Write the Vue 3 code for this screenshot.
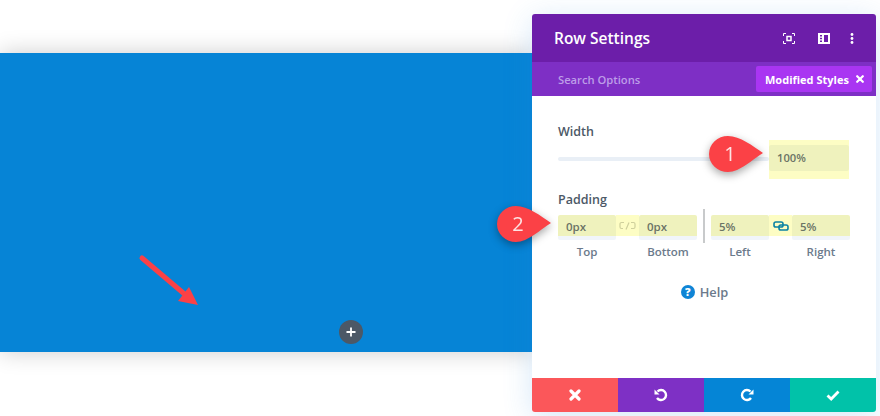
<script setup>
const fields = [
  { label: 'Top', value: '0px' },
  { label: 'Bottom', value: '0px' },
  { label: 'Left', value: '5%' },
  { label: 'Right', value: '5%' },
]
</script>

<template>
  <div class="page">
    <div class="canvas">
      <div class="band">
        <svg class="arrow" width="64" height="56" viewBox="0 0 64 56">
          <path d="M4 4 L50 43" stroke="#fb4146" stroke-width="5" stroke-linecap="round" fill="none" />
          <path d="M60 51 L40 47 L51 33 Z" fill="#fb4146" />
        </svg>
        <div class="add">
          <svg width="10" height="10" viewBox="0 0 10 10">
            <path d="M5 .5v9M.5 5h9" stroke="#fff" stroke-width="1.8" />
          </svg>
        </div>
      </div>
    </div>

    <aside class="panel">
      <header class="head">
        <h1>Row Settings</h1>
        <div class="head-icons">
          <svg class="focus-icon" width="12" height="11" viewBox="0 0 12 11" fill="none" stroke="#fff" stroke-width="1">
            <path d="M.5 3V.5H3M9 .5h2.500V3M11.500 8v2.500H9M3 10.500H.5V8" />
            <rect x="4" y="3.500" width="4" height="4" stroke-width="1.500" />
          </svg>
          <svg width="12" height="11" viewBox="0 0 12 11">
            <path fill="#fff" fill-rule="evenodd" d="M0 0h12v11H0zM6 2v7h4V2zM2 2v1.500h2V2zM2 4.700v1.500h2V4.700zM2 7.400v1.500h2V7.400z" />
          </svg>
          <svg width="4" height="11" viewBox="0 0 4 11">
            <circle cx="2" cy="1.500" r="1.400" fill="#fff" />
            <circle cx="2" cy="5.500" r="1.400" fill="#fff" />
            <circle cx="2" cy="9.500" r="1.400" fill="#fff" />
          </svg>
        </div>
      </header>
      <div class="tabs">
        <span class="search">Search Options</span>
        <span class="modified">
          Modified Styles
          <svg width="8" height="8" viewBox="0 0 8 8">
            <path d="M1.200 1.200l5.600 5.600M6.800 1.200L1.200 6.800" stroke="#fff" stroke-width="2.200" stroke-linecap="round" />
          </svg>
        </span>
      </div>

      <div class="body">
        <div class="label">Width</div>
        <div class="width-row">
          <div class="slider"></div>
          <div class="width-glow">
            <div class="width-input">100%</div>
          </div>
        </div>

        <div class="label padding-label">Padding</div>
        <div class="padding-row">
          <template v-for="(f, i) in fields" :key="f.label">
            <div class="col">
              <div class="input">{{ f.value }}</div>
              <div class="cap">{{ f.label }}</div>
            </div>
            <div v-if="i === 0" class="link">
              <svg width="17" height="10" viewBox="0 0 17 10" fill="none" stroke="#cfd09c" stroke-width="1.200">
                <path d="M5 1.500H2.500a1.500 1.500 0 0 0-1.500 1.500v3a1.500 1.500 0 0 0 1.500 1.500H4M12 1.500h2.500a1.500 1.500 0 0 1 1.500 1.500v3a1.500 1.500 0 0 1-1.500 1.500H12M7 8.500l3-7" />
              </svg>
            </div>
            <div v-if="i === 1" class="divider-gap"><span class="divider"></span></div>
            <div v-if="i === 2" class="link">
              <svg width="16" height="10" viewBox="0 0 16 10" fill="none" stroke="#0b83a3" stroke-width="1.600">
                <rect x="1" y="1" width="9" height="5" rx="1.800" />
                <rect x="6" y="4" width="9" height="5" rx="1.800" />
              </svg>
            </div>
          </template>
        </div>

        <div class="help">
          <span class="help-dot">?</span>
          <span>Help</span>
        </div>
      </div>

      <footer class="foot">
        <button class="red">
          <svg width="12" height="12" viewBox="0 0 12 12">
            <path d="M2 2l8 8M10 2l-8 8" stroke="#fff" stroke-width="3.200" stroke-linecap="round" />
          </svg>
        </button>
        <button class="violet">
          <svg width="14" height="14" viewBox="0 0 14 14" fill="none">
            <path d="M3.500 3.500A5 5 0 1 1 3 10" stroke="#fff" stroke-width="2.400" />
            <path d="M.5 1.500v5h5z" fill="#fff" />
          </svg>
        </button>
        <button class="blue">
          <svg width="14" height="14" viewBox="0 0 14 14" fill="none">
            <path d="M10.500 3.500A5 5 0 1 0 11 10" stroke="#fff" stroke-width="2.400" />
            <path d="M13.500 1.500v5h-5z" fill="#fff" />
          </svg>
        </button>
        <button class="teal">
          <svg width="14" height="11" viewBox="0 0 14 11" fill="none">
            <path d="M1.500 5.500l3.700 3.500 7.300-7.500" stroke="#fff" stroke-width="2.800" />
          </svg>
        </button>
      </footer>
    </aside>

    <div class="callout callout-one">
      <svg width="60" height="46" viewBox="0 0 60 46">
        <path d="M21 3C33 3 46 13 56 20 46 26 33 39 21 39A19 18 0 0 1 21 3Z" fill="#fb4146" />
      </svg>
      <span>1</span>
    </div>
    <div class="callout callout-two">
      <svg width="60" height="46" viewBox="0 0 60 46">
        <path d="M21 3C33 3 46 13 56 20 46 26 33 39 21 39A19 18 0 0 1 21 3Z" fill="#fb4146" />
      </svg>
      <span>2</span>
    </div>
  </div>
</template>

<style>
body {
  margin: 0;
  background: #fff;
}
</style>

<style scoped>
.page {
  position: relative;
  display: flex;
  width: 880px;
  height: 416px;
  overflow: hidden;
  background: #fff;
  font-family: "Open Sans", "Liberation Sans", sans-serif;
}

.canvas {
  width: 532px;
  padding-top: 53px;
}

.band {
  position: relative;
  height: 299px;
  background: #0684d6;
  box-shadow: 0 0 22px rgba(0, 0, 0, 0.2);
}

.arrow {
  position: absolute;
  left: 138px;
  top: 201px;
}

.add {
  position: absolute;
  left: 339px;
  top: 267px;
  display: flex;
  align-items: center;
  justify-content: center;
  width: 24px;
  height: 24px;
  border-radius: 50%;
  background: #4c5866;
}

.panel {
  position: relative;
  display: flex;
  flex-direction: column;
  width: 344px;
  height: 398px;
  margin-top: 14px;
  border-radius: 3px;
  overflow: hidden;
  background: #fff;
  box-shadow: 0 5px 30px rgba(43, 135, 218, 0.2);
}

.head {
  display: flex;
  align-items: center;
  justify-content: space-between;
  height: 48px;
  padding: 0 22px;
  background: #6c1ea9;
}

.head h1 {
  margin: 0;
  font-size: 15.500px;
  font-weight: 600;
  color: #fff;
}

.head-icons {
  display: flex;
  align-items: center;
  gap: 20px;
}

.focus-icon {
  margin-right: 3px;
}

.tabs {
  display: flex;
  align-items: center;
  justify-content: space-between;
  height: 34px;
  padding: 0 4px 0 26px;
  background: #7e2fc5;
}

.search {
  font-size: 11.200px;
  font-weight: 600;
  color: #bd9de8;
}

.modified {
  display: flex;
  align-items: center;
  justify-content: space-between;
  box-sizing: border-box;
  width: 116px;
  height: 26px;
  padding: 0 8px 0 9px;
  border-radius: 2px;
  background: #a935f2;
  font-size: 11px;
  font-weight: 700;
  color: #fff;
}

.body {
  flex: 1;
  padding: 27px 26px 0;
}

.label {
  font-size: 12.500px;
  line-height: 18px;
  font-weight: 600;
  color: #4c5866;
}

.width-row {
  display: flex;
  align-items: center;
  margin-top: -1px;
}

.slider {
  flex: 1;
  height: 4px;
  margin-top: -1px;
  border-radius: 2px;
  background: #e9eff6;
}

.width-glow {
  width: 80px;
  margin-right: 1px;
  padding: 5px 0 8px;
  background: #fdfdc4;
}

.width-input {
  height: 26px;
  padding-left: 8px;
  font-size: 11.200px;
  line-height: 26px;
  font-weight: 600;
  color: #6b7466;
  background: #eff2bd;
  border-radius: 2px;
}

.padding-label {
  margin-top: 12px;
}

.padding-row {
  display: flex;
  margin-top: 6px;
}

.col {
  width: 58px;
}

.input {
  height: 25px;
  padding-left: 8px;
  font-size: 11.500px;
  line-height: 24px;
  font-weight: 600;
  color: #6b7466;
  background: linear-gradient(#eff2bd 0 21px, #f1f5fa 21px);
  border-radius: 2px;
}

.cap {
  margin-top: 4px;
  text-align: center;
  font-size: 11.500px;
  line-height: 16px;
  font-weight: 600;
  color: #6b7a8b;
}

.link {
  display: flex;
  align-items: center;
  justify-content: center;
  width: 23px;
  height: 21px;
  background: #fdfdc4;
}

.divider-gap {
  display: flex;
  justify-content: center;
  width: 14px;
}

.divider {
  width: 2px;
  height: 34px;
  margin-top: -6px;
  background: #c8cacb;
}

.help {
  display: flex;
  align-items: center;
  justify-content: center;
  gap: 5px;
  margin-top: 23px;
  margin-left: 1px;
  font-size: 12.800px;
  line-height: 18px;
  font-weight: 600;
  color: #6b7a8b;
}

.help-dot {
  display: flex;
  align-items: center;
  justify-content: center;
  width: 14px;
  height: 14px;
  border-radius: 50%;
  background: #0f85d6;
  font-size: 11px;
  font-weight: 800;
  color: #fff;
}

.foot {
  display: flex;
  height: 34px;
}

.foot button {
  flex: 1;
  display: flex;
  align-items: center;
  justify-content: center;
  padding: 0;
  border: 0;
}

.red {
  background: #fb575a;
}

.violet {
  background: #7e30c5;
}

.blue {
  background: #0585d6;
}

.teal {
  background: #01c2a9;
}

.callout {
  position: absolute;
  width: 60px;
  height: 46px;
  filter: drop-shadow(0 3px 4px rgba(0, 0, 0, 0.35));
}

.callout svg {
  display: block;
}

.callout span {
  position: absolute;
  left: 0;
  top: 4px;
  width: 46px;
  text-align: center;
  font-size: 20px;
  line-height: 34px;
  color: #fde3e3;
}

.callout-one {
  left: 707px;
  top: 133px;
}

.callout-two {
  left: 495px;
  top: 203px;
}
</style>
